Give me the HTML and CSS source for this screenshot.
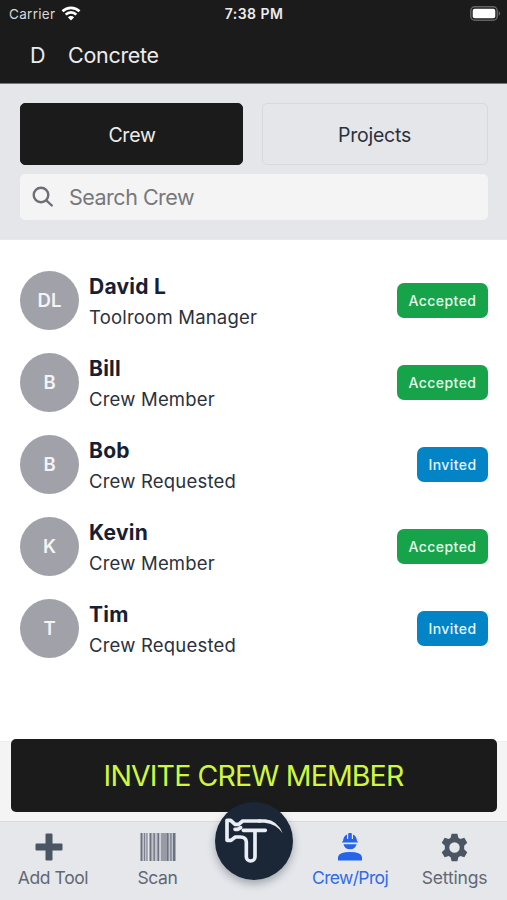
FILE: index.html
```html
<!DOCTYPE html>
<html lang="en">
<head>
<meta charset="utf-8">
<title>Crew</title>
<link rel="stylesheet" href="styles.css">
</head>
<body>
<header class="header">
  <div class="status">
    <div class="carrier"><span>Carrier</span>
      <svg width="20" height="15" viewBox="0 0 20 15" fill="none" stroke="#fff" stroke-width="2.700"><path d="M1.500 5.300a12.200 12.200 0 0 1 17 0M4.700 8.600a7.500 7.500 0 0 1 10.600 0"/><path d="M10 14.400l-3.100-3.200a4.400 4.400 0 0 1 6.200 0z" fill="#fff" stroke="none"/></svg>
    </div>
    <span class="time">7:38 PM</span>
    <svg class="battery" width="31" height="15" viewBox="0 0 31 15"><rect x=".8" y=".8" width="26.400" height="13.400" rx="4" fill="none" stroke="#636363" stroke-width="1.500"/><rect x="2.700" y="2.700" width="22.600" height="9.600" rx="2" fill="#fff"/><path d="M28.700 5q3 2.500 0 5z" fill="#636363"/></svg>
  </div>
  <div class="title"><span class="initial">D</span><span>Concrete</span></div>
</header>
<section class="tools">
  <div class="tabs"><div class="tab active">Crew</div><div class="tab">Projects</div></div>
  <div class="search">
    <svg width="22" height="22" viewBox="0 0 22 22" fill="none" stroke="#6d6f73" stroke-width="2.400" stroke-linecap="round"><circle cx="9" cy="9" r="7.300"/><path d="M14.300 14.300l5.500 5.200"/></svg>
    <span>Search Crew</span>
  </div>
</section>
<main class="list">
  <div class="row"><div class="avatar">DL</div><div class="who"><b>David L</b><span class="role">Toolroom Manager</span></div><div class="badge">Accepted</div></div>
  <div class="row"><div class="avatar">B</div><div class="who"><b>Bill</b><span class="role">Crew Member</span></div><div class="badge">Accepted</div></div>
  <div class="row"><div class="avatar">B</div><div class="who"><b>Bob</b><span class="role">Crew Requested</span></div><div class="badge invited">Invited</div></div>
  <div class="row"><div class="avatar">K</div><div class="who"><b>Kevin</b><span class="role">Crew Member</span></div><div class="badge">Accepted</div></div>
  <div class="row"><div class="avatar">T</div><div class="who"><b>Tim</b><span class="role">Crew Requested</span></div><div class="badge invited">Invited</div></div>
</main>
<div class="action"><div class="invite">INVITE CREW MEMBER</div></div>
<nav class="nav">
  <div class="item add">
    <svg width="28" height="28" viewBox="0 0 28 28"><path d="M11.500.5h5q1 0 1 1v9h9q1 0 1 1v5q0 1-1 1h-9v9q0 1-1 1h-5q-1 0-1-1v-9h-9q-1 0-1-1v-5q0-1 1-1h9v-9q0-1 1-1z" fill="#4b5563"/></svg>
    <span>Add Tool</span>
  </div>
  <div class="item scan">
    <svg width="36" height="28" viewBox="0 0 36 28"><g fill="#6b7280"><path d="M.5 0h2v28h-2zM9.500 0h2v28h-2zM13.500 0h1.300v28h-1.300zM17.500 0h1.500v28h-1.500zM27 0h1.700v28H27zM33 0h2.500v28H33z"/><path d="M4 0h1v28H4zM6.500 0h1v28h-1zM30.200 0h1.400v28h-1.400z" opacity=".8"/><path d="M20.700 0h6.300v28h-6.300z" opacity=".65"/><path d="M2.500 0h5v28h-5zM11.500 0H20v28h-8.500zM29 0h4v28h-4z" opacity=".3"/></g></svg>
    <span>Scan</span>
  </div>
  <div class="item home"><div class="logo">
    <svg width="78" height="78" viewBox="30 22 234 234" fill="none" stroke="#e9edf5" stroke-width="11" stroke-linejoin="round" stroke-linecap="round"><path d="M115 107H181M150 109V186a13 13 0 0 1-26 0V142Q123 127 106 127H91L78 137H66V77H77L90 89H101L113 79H165"/><path d="M90 104H98L107 99"/><path d="M160 73.500H181Q218 77 233 116Q213 87 178 84.500H160z" fill="#e9edf5" stroke="none"/></svg>
  </div></div>
  <div class="item crew">
    <svg width="24" height="28" viewBox="0 0 24 28" fill="#2563eb"><path d="M5 8.200Q5.300 3.300 9 1.500V6h1.200V1q0-1 1-1h1.600q1 0 1 1v5H15V1.500q3.700 1.800 4 6.700h.2q.8 0 .8.700t-.8.700H4.800Q4 9.600 4 8.900t.8-.7z"/><path d="M5.500 11.200h13q-1 5-6.500 5t-6.500-5zM0 27.500V24q1-5 12-5t12 5v3.500z"/></svg>
    <span>Crew/Proj</span>
  </div>
  <div class="item settings">
    <svg width="30" height="30" viewBox="0 0 30 30"><path fill="#4b5563" fill-rule="evenodd" d="M12 .8h6l1 4.200 2 1.200 4.200-1.300 3 5.200-3.200 3v3.800l3.200 3-3 5.200-4.200-1.300-2 1.200-1 4.200h-6l-1-4.200-2-1.200-4.200 1.300-3-5.200 3.200-3v-3.800l-3.200-3 3-5.200L9 6.200 11 5zM15 9.600a5.400 5.400 0 1 0 0 10.800 5.400 5.400 0 0 0 0-10.800z"/></svg>
    <span>Settings</span>
  </div>
</nav>
</body>
</html>
```
FILE: styles.css
```css
* { box-sizing: border-box; }
body { margin: 0; height: 900px; display: flex; flex-direction: column; overflow: hidden; background: #fff; font-family: Inter, "Liberation Sans", sans-serif; color: #2b313c; }
svg { display: block; flex-shrink: 0; }
span, b { white-space: nowrap; }
.header { height: 84px; background: #1b1b1b; color: #ececec; border-bottom: 1px solid #777; }
.status { height: 27px; display: grid; grid-template-columns: 1fr auto 1fr; align-items: center; padding: 0 6px 0 9px; }
.carrier { display: flex; align-items: center; gap: 6px; font-size: 13.500px; letter-spacing: .3px; color: #d8d8d8; }
.time { font-size: 14px; font-weight: 600; letter-spacing: .45px; margin-right: 2px; }
.battery { justify-self: end; }
.title { height: 55px; display: flex; align-items: center; padding-left: 30px; font-size: 21.500px; letter-spacing: -.3px; }
.initial { width: 38px; }
.tools { height: 156px; background: #e5e6ea; padding: 19px 19px 0 20px; border-bottom: 1px solid #e9eaed; }
.tabs { display: grid; grid-template-columns: 223px 226px; justify-content: space-between; }
.tab { height: 62px; border: 1px solid #d8d9dd; border-radius: 5px; display: grid; place-items: center; padding: 1px 1px 0 0; font-size: 19.500px; letter-spacing: -.25px; }
.tab.active { background: #1b1b1b; border-color: #1b1b1b; color: #ececec; padding: 1px 0 0 1px; }
.search { height: 46px; margin-top: 9px; border-radius: 5px; background: #f4f4f5; display: flex; align-items: center; padding-left: 12px; gap: 15px; font-size: 21.500px; letter-spacing: -.5px; color: #77787b; }
.list { flex: 1; padding: 20px 19px 0 20px; }
.row { height: 81.900px; display: flex; align-items: center; }
.avatar { width: 59px; height: 59px; border-radius: 50%; background: #a1a1aa; color: #f4f4f5; display: grid; place-items: center; font-size: 18.500px; line-height: 22px; padding-bottom: 1px; font-weight: 600; }
.who { flex: 1; margin-left: 10px; padding-top: 2px; display: flex; flex-direction: column; gap: 3px; }
.who b { font-size: 21px; line-height: 28px; font-weight: 650; color: #172033; letter-spacing: .25px; }
.role { font-size: 18.500px; line-height: 27px; letter-spacing: .2px; }
.badge { height: 35px; width: 91px; border-radius: 7px; background: #16a34a; color: #e7faed; display: grid; place-items: center; font-size: 14px; font-weight: 550; letter-spacing: .45px; }
.badge.invited { width: 71px; background: #0284c7; color: #e5f5ff; }
.action { height: 80px; background: #f4f4f4; padding: 0 10px 0 11px; border-top: 1px solid #eee; }
.invite { height: 73px; margin-top: -3px; padding-right: 1px; background: #1b1b1b; border-radius: 5px; color: #d0f83b; font-size: 28.500px; letter-spacing: -.85px; display: grid; place-items: center; }
.nav { height: 79px; background: #e5e7eb; border-top: 1px solid #d9dadd; display: grid; grid-template-columns: 106px 103px 90px 102px 106px; color: #626873; font-size: 17.500px; letter-spacing: -.4px; }
.item { display: flex; flex-direction: column; align-items: center; padding-top: 11px; }
.item span { line-height: 22px; margin-top: 6px; }
.add svg { margin-right: 8px; }
.home { padding-top: 0; }
.logo { width: 78px; height: 78px; margin-top: -20px; border-radius: 50%; background: #1b2736; box-shadow: 0 4px 9px #1b273655; }
.crew { color: #2f6bea; letter-spacing: -.65px; }
.settings { letter-spacing: -.2px; padding-left: 1px; }
.settings svg { height: 29px; width: 29px; margin-bottom: -1px; }
```
